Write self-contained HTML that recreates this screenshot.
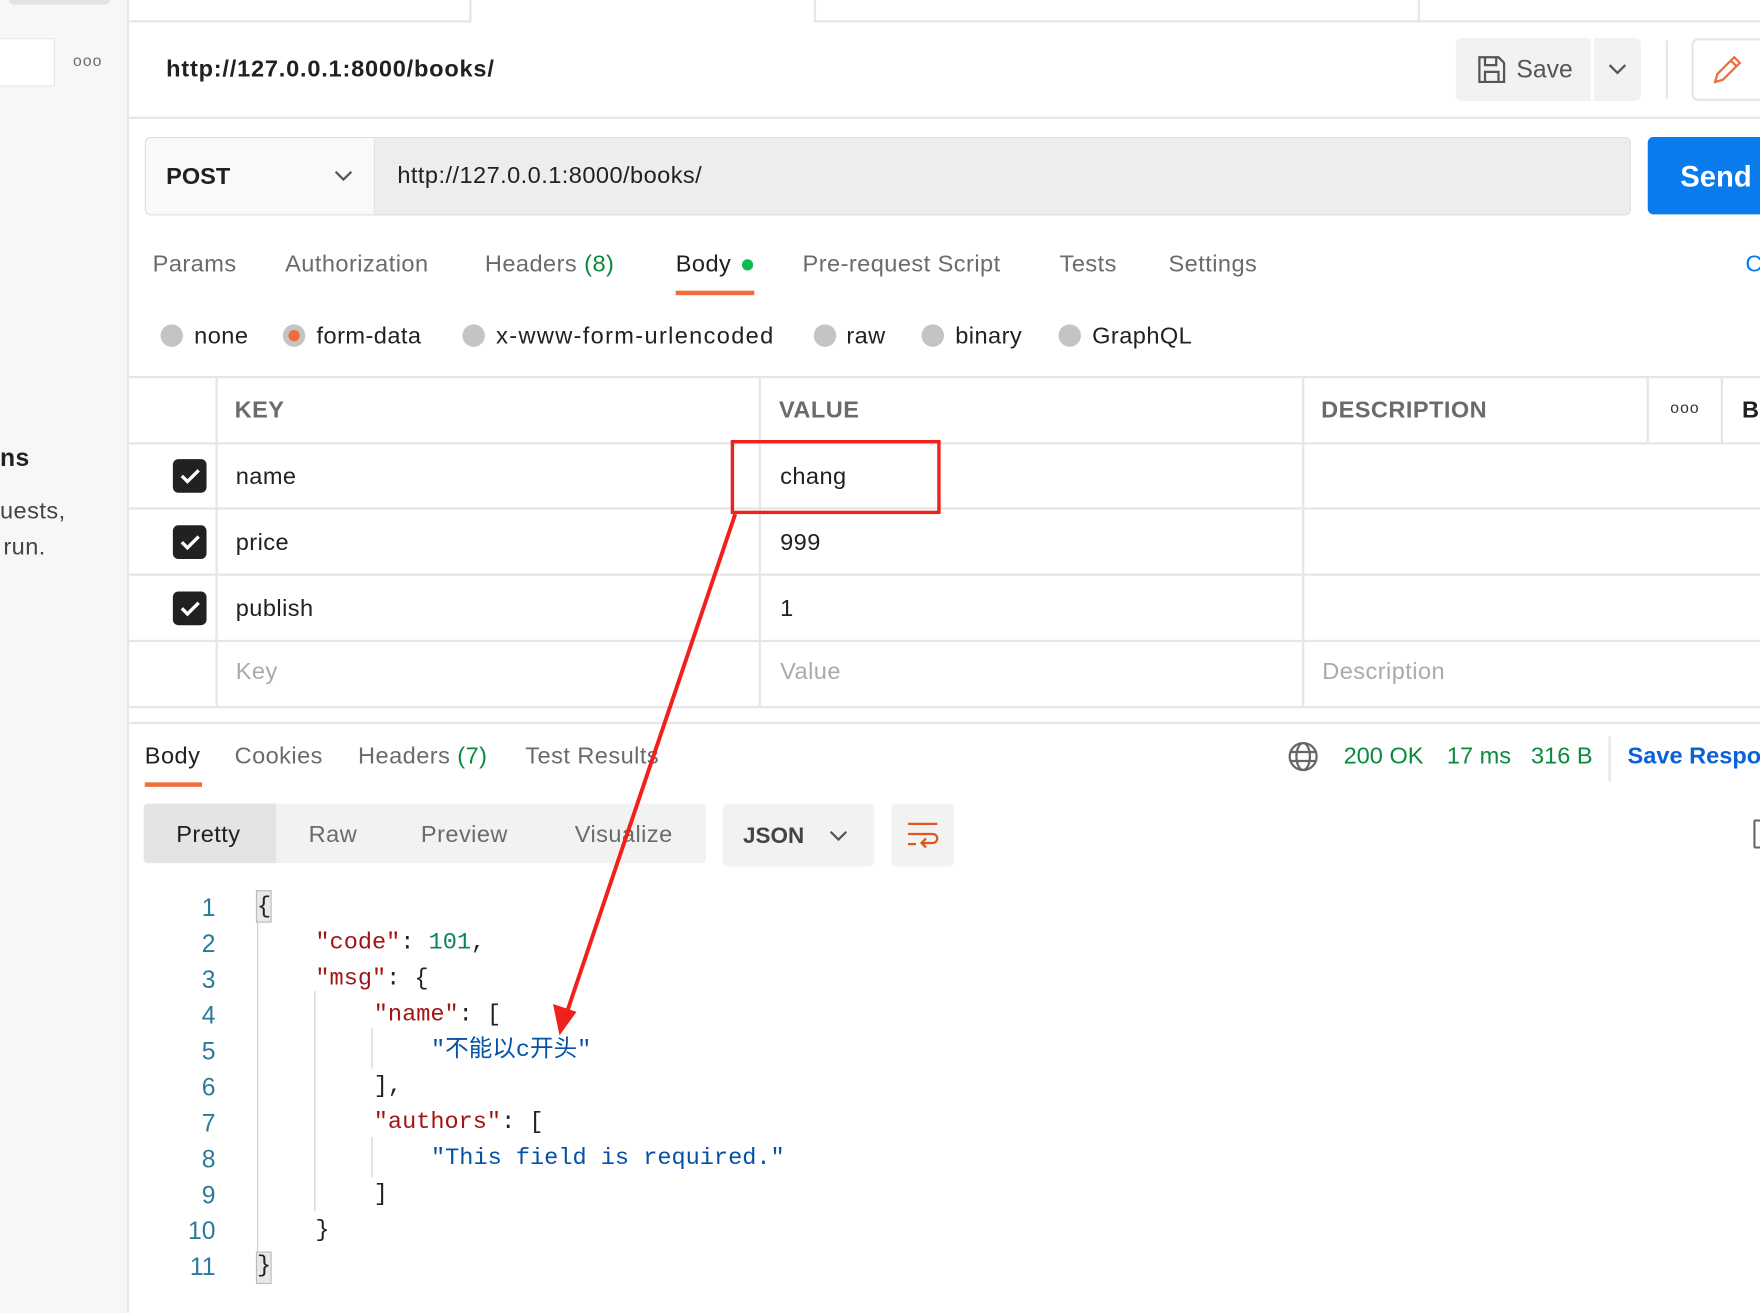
<!DOCTYPE html>
<html><head><meta charset="utf-8"><style>
html,body{margin:0;padding:0;width:1760px;height:1313px;overflow:hidden;background:#fff}
#w{position:absolute;left:0;top:0;width:1568px;height:1170px;transform:scale(1.12245);transform-origin:0 0;font-family:"Liberation Sans","Noto Sans CJK SC",sans-serif;color:#212121}
.a{position:absolute;white-space:nowrap}
.t{font-size:21px;line-height:24px;letter-spacing:0.4px}
.g{color:#6b6b6b}
.hl{position:absolute;height:2px;background:#e6e6e6}
.vl{position:absolute;width:2px;background:#e6e6e6}
.rad{position:absolute;width:20px;height:20px;border-radius:50%;background:#c4c4c4;top:289px}
.cb{position:absolute;left:154px;width:30px;height:30px;border-radius:5px;background:#212121}
.mono{font-family:"Liberation Mono","Noto Sans CJK SC",monospace;font-size:21px;line-height:24px}
.ln{position:absolute;width:40px;left:152px;text-align:right;color:#2a7b9b;font-size:22px}
.k{color:#a31515}.n{color:#098658}.s{color:#0451a5}
</style></head><body><div id="w">
<div class="a" style="left:0;top:0;width:113px;height:1170px;background:#f7f7f7;border-right:2px solid #e6e6e6"></div>
<div class="a" style="left:8px;top:0;width:90px;height:4px;background:#e2e2e2;border-radius:0 0 4px 4px"></div>
<div class="a" style="left:0;top:34px;width:48px;height:41px;background:#fff;border:1px solid #e6e6e6;border-left:none"></div>
<div class="a g" style="left:65px;top:46px;font-size:14px;letter-spacing:1px">ooo</div>
<div class="a t" style="left:0;top:396px;font-weight:bold;font-size:22px">ns</div>
<div class="a t" style="left:0;top:444px;color:#444">uests,</div>
<div class="a t" style="left:3px;top:476px;color:#444">run.</div>
<div class="hl" style="left:115px;top:18px;width:305px"></div>
<div class="hl" style="left:725px;top:18px;width:843px"></div>
<div class="vl" style="left:418px;top:0;height:20px"></div>
<div class="vl" style="left:725px;top:0;height:20px"></div>
<div class="vl" style="left:1263px;top:0;height:20px"></div>
<div class="a" style="left:148px;top:49px;font-size:21px;font-weight:bold;line-height:26px;letter-spacing:0.7px">http://127.0.0.1:8000/books/</div>
<div class="a" style="left:1297px;top:34px;width:120px;height:56px;background:#f2f2f2;border-radius:5px 0 0 5px"></div>
<svg class="a" style="left:1315px;top:48px" width="28" height="28" viewBox="0 0 28 28" fill="none" stroke="#555" stroke-width="2"><path d="M3 3h17l5 5v17H3z"/><path d="M8 3v7h10V3M8 25v-9h12v9"/></svg>
<div class="a g" style="left:1351px;top:49px;font-size:22px;color:#555">Save</div>
<div class="a" style="left:1420px;top:34px;width:42px;height:56px;background:#f2f2f2;border-radius:0 5px 5px 0"></div>
<svg class="a" style="left:1432px;top:55px" width="18" height="14"><path d="M2 3l7 7 7-7" fill="none" stroke="#555" stroke-width="2"/></svg>
<div class="vl" style="left:1484px;top:36px;height:52px"></div>
<div class="a" style="left:1507px;top:34px;width:70px;height:52px;border:2px solid #e6e6e6;border-radius:6px"></div>
<svg class="a" style="left:1524px;top:47px" width="30" height="30" viewBox="0 0 30 30" fill="none" stroke="#f26b3a" stroke-width="2"><path d="M4 26l2-7L21 4l5 5-15 15z"/><path d="M18 7l5 5"/></svg>
<div class="hl" style="left:115px;top:104px;width:1453px"></div>
<div class="a" style="left:129px;top:122px;width:1322px;height:68px;border:1px solid #e0e0e0;border-radius:5px;background:#ededed"></div>
<div class="a" style="left:130px;top:123px;width:203px;height:68px;background:#f9f9f9;border-right:1px solid #e0e0e0;border-radius:5px 0 0 5px"></div>
<div class="a" style="left:148px;top:146px;font-size:21px;font-weight:bold">POST</div>
<svg class="a" style="left:297px;top:150px" width="18" height="14"><path d="M2 3l7 7 7-7" fill="none" stroke="#555" stroke-width="2"/></svg>
<div class="a t" style="left:354px;top:145px">http://127.0.0.1:8000/books/</div>
<div class="a" style="left:1468px;top:122px;width:110px;height:69px;background:#097bed;border-radius:5px"></div>
<div class="a" style="left:1497px;top:142px;color:#fff;font-weight:bold;font-size:26px">Send</div>
<div class="a t g" style="left:136px;top:224px">Params</div>
<div class="a t g" style="left:254px;top:224px">Authorization</div>
<div class="a t g" style="left:432px;top:224px">Headers <span style="color:#0a8a3c">(8)</span></div>
<div class="a t" style="left:602px;top:224px">Body</div>
<div class="a" style="left:661px;top:231px;width:10px;height:10px;border-radius:50%;background:#0cbb52"></div>
<div class="a" style="left:602px;top:259px;width:70px;height:4px;background:#f26b3a"></div>
<div class="a t g" style="left:715px;top:224px">Pre-request Script</div>
<div class="a t g" style="left:944px;top:224px">Tests</div>
<div class="a t g" style="left:1041px;top:224px">Settings</div>
<div class="a t" style="left:1555px;top:224px;color:#097bed">C</div>
<div class="rad" style="left:143px"></div><div class="a t" style="left:173px;top:288px">none</div>
<div class="rad" style="left:252px"></div><div class="a" style="left:257px;top:294px;width:10px;height:10px;border-radius:50%;background:#f26b3a"></div><div class="a t" style="left:282px;top:288px">form-data</div>
<div class="rad" style="left:412px"></div><div class="a t" style="left:442px;top:288px;letter-spacing:1.2px">x-www-form-urlencoded</div>
<div class="rad" style="left:725px"></div><div class="a t" style="left:754px;top:288px">raw</div>
<div class="rad" style="left:821px"></div><div class="a t" style="left:851px;top:288px">binary</div>
<div class="rad" style="left:943px"></div><div class="a t" style="left:973px;top:288px">GraphQL</div>
<div class="hl" style="left:115px;top:335px;width:1453px"></div>
<div class="hl" style="left:115px;top:394px;width:1453px"></div>
<div class="hl" style="left:115px;top:452px;width:1453px"></div>
<div class="hl" style="left:115px;top:511px;width:1453px"></div>
<div class="hl" style="left:115px;top:570px;width:1453px"></div>
<div class="hl" style="left:115px;top:629px;width:1453px"></div>
<div class="vl" style="left:192px;top:336px;height:294px"></div>
<div class="vl" style="left:676px;top:336px;height:294px"></div>
<div class="vl" style="left:1160px;top:336px;height:294px"></div>
<div class="vl" style="left:1467px;top:336px;height:59px"></div>
<div class="vl" style="left:1533px;top:336px;height:59px"></div>
<div class="a t g" style="left:209px;top:354px;font-weight:bold">KEY</div>
<div class="a t g" style="left:694px;top:354px;font-weight:bold">VALUE</div>
<div class="a t g" style="left:1177px;top:354px;font-weight:bold">DESCRIPTION</div>
<div class="a" style="left:1488px;top:355px;font-size:14px;letter-spacing:1px;color:#333">ooo</div>
<div class="a t" style="left:1552px;top:354px;font-weight:bold">B</div>
<div class="cb" style="top:409px"></div><div class="cb" style="top:468px"></div><div class="cb" style="top:527px"></div>
<svg class="a" style="left:154px;top:409px" width="30" height="150" fill="none" stroke="#fff" stroke-width="3"><path d="M8 15l5 5 10-10M8 74l5 5 10-10M8 133l5 5 10-10"/></svg>
<div class="a t" style="left:210px;top:413px">name</div>
<div class="a t" style="left:210px;top:472px">price</div>
<div class="a t" style="left:210px;top:531px">publish</div>
<div class="a t" style="left:695px;top:413px">chang</div>
<div class="a t" style="left:695px;top:472px">999</div>
<div class="a t" style="left:695px;top:531px">1</div>
<div class="a t" style="left:210px;top:587px;color:#aaa">Key</div>
<div class="a t" style="left:695px;top:587px;color:#aaa">Value</div>
<div class="a t" style="left:1178px;top:587px;color:#aaa">Description</div>
<div class="a" style="left:651px;top:392px;width:181px;height:60px;border:3px solid #f0201a"></div>
<div class="hl" style="left:115px;top:643px;width:1453px"></div>
<div class="a t" style="left:129px;top:662px">Body</div>
<div class="a" style="left:129px;top:697px;width:51px;height:4px;background:#f26b3a"></div>
<div class="a t g" style="left:209px;top:662px">Cookies</div>
<div class="a t g" style="left:319px;top:662px">Headers <span style="color:#0a8a3c">(7)</span></div>
<div class="a t g" style="left:468px;top:662px">Test Results</div>
<svg class="a" style="left:1147px;top:660px" width="28" height="28" viewBox="0 0 28 28" fill="none" stroke="#666" stroke-width="2"><circle cx="14" cy="14" r="12"/><ellipse cx="14" cy="14" rx="6" ry="12"/><path d="M3 10h22M3 18h22"/></svg>
<div class="a t" style="left:1197px;top:662px;color:#0a8a3c;letter-spacing:0">200 OK</div>
<div class="a t" style="left:1289px;top:662px;color:#0a8a3c;letter-spacing:0">17 ms</div>
<div class="a t" style="left:1364px;top:662px;color:#0a8a3c;letter-spacing:0">316 B</div>
<div class="vl" style="left:1433px;top:656px;height:40px"></div>
<div class="a t" style="left:1450px;top:662px;color:#0a62d8;font-weight:bold;letter-spacing:0">Save Respo</div>
<div class="a" style="left:1562px;top:730px;width:6px;height:22px;border:2px solid #666;border-right:none;border-radius:2px"></div>
<div class="a" style="left:128px;top:716px;width:501px;height:53px;background:#f2f2f2;border-radius:4px"></div>
<div class="a" style="left:128px;top:716px;width:118px;height:53px;background:#e4e4e4;border-radius:4px 0 0 4px"></div>
<div class="a t" style="left:157px;top:732px">Pretty</div>
<div class="a t g" style="left:275px;top:732px">Raw</div>
<div class="a t g" style="left:375px;top:732px">Preview</div>
<div class="a t g" style="left:512px;top:732px">Visualize</div>
<div class="a" style="left:644px;top:716px;width:135px;height:56px;background:#f2f2f2;border-radius:5px"></div>
<div class="a" style="left:662px;top:734px;font-size:20px;font-weight:bold;color:#444">JSON</div>
<svg class="a" style="left:738px;top:738px" width="18" height="14"><path d="M2 3l7 7 7-7" fill="none" stroke="#555" stroke-width="2"/></svg>
<div class="a" style="left:794px;top:716px;width:56px;height:56px;background:#f2f2f2;border-radius:5px"></div>
<svg class="a" style="left:807px;top:731px" width="30" height="28" fill="none" stroke="#e0561e" stroke-width="2"><path d="M2 3h26M2 12h22a4 4 0 0 1 0 8h-9M18 16l-4 4 4 4M2 21h7"/></svg>
<div class="a" style="left:228px;top:793px;width:12px;height:27px;background:#e8e8e8;border:1px solid #bbb"></div>
<div class="a" style="left:228px;top:1115px;width:12px;height:27px;background:#e8e8e8;border:1px solid #bbb"></div>
<div class="vl" style="left:229px;top:820px;width:1px;height:296px;background:#ccc"></div>
<div class="vl" style="left:280px;top:883px;width:1px;height:196px;background:#ccc"></div>
<div class="vl" style="left:331px;top:916px;width:1px;height:36px;background:#ccc"></div>
<div class="vl" style="left:331px;top:1013px;width:1px;height:36px;background:#ccc"></div>
<div class="ln a" style="top:796px">1</div><div class="ln a" style="top:828px">2</div><div class="ln a" style="top:860px">3</div><div class="ln a" style="top:892px">4</div><div class="ln a" style="top:924px">5</div><div class="ln a" style="top:956px">6</div><div class="ln a" style="top:988px">7</div><div class="ln a" style="top:1020px">8</div><div class="ln a" style="top:1052px">9</div><div class="ln a" style="top:1084px">10</div><div class="ln a" style="top:1116px">11</div>
<div class="a mono" style="left:229px;top:797px">{</div>
<div class="a mono" style="left:281px;top:829px"><span class="k">"code"</span>: <span class="n">101</span>,</div>
<div class="a mono" style="left:281px;top:861px"><span class="k">"msg"</span>: {</div>
<div class="a mono" style="left:333px;top:893px"><span class="k">"name"</span>: [</div>
<div class="a mono s" style="left:384px;top:925px">"不能以c开头"</div>
<div class="a mono" style="left:333px;top:957px">],</div>
<div class="a mono" style="left:333px;top:989px"><span class="k">"authors"</span>: [</div>
<div class="a mono s" style="left:384px;top:1021px">"This field is required."</div>
<div class="a mono" style="left:333px;top:1053px">]</div>
<div class="a mono" style="left:281px;top:1085px">}</div>
<div class="a mono" style="left:229px;top:1117px">}</div>
<svg class="a" style="left:0;top:0" width="1568" height="1170"><path d="M655 458L505 902" stroke="#f0201a" stroke-width="3.5" fill="none"/><path d="M499 920L494 896L512 902z" fill="#f0201a" stroke="#f0201a" stroke-width="2"/></svg>
</div></body></html>
